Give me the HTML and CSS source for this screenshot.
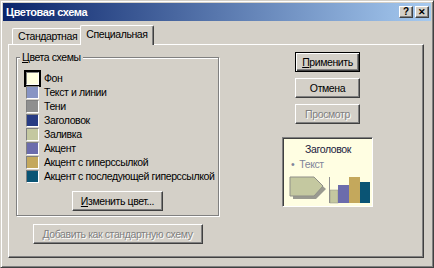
FILE: index.html
```html
<!DOCTYPE html>
<html lang="ru">
<head>
  <meta charset="UTF-8" />
  <title>Цветовая схема</title>
  <link rel="stylesheet" href="styles.css">
</head>
<body>
  <div class="window">
    <div class="titlebar">
      <span class="title">Цветовая схема</span>
      <div class="caption-btns">
        <span class="cap-btn">?</span>
        <span class="cap-btn close">&#x2715;</span>
      </div>
    </div>

    <div class="tabs">
      <div class="tab">Стандартная</div>
      <div class="tab active">Специальная</div>
    </div>

    <div class="panel">
      <div class="left-col">
        <fieldset class="group">
          <legend><u>Ц</u>вета схемы</legend>
          <div class="row"><span class="swatch selected" style="background:#ffffe0"></span>Фон</div>
          <div class="row"><span class="swatch" style="background:#8794c4"></span>Текст и линии</div>
          <div class="row"><span class="swatch" style="background:#8f8f8f"></span>Тени</div>
          <div class="row"><span class="swatch" style="background:#283c84"></span>Заголовок</div>
          <div class="row"><span class="swatch" style="background:#c4c8a0"></span>Заливка</div>
          <div class="row"><span class="swatch" style="background:#6c6cac"></span>Акцент</div>
          <div class="row"><span class="swatch" style="background:#c4a85c"></span>Акцент с гиперссылкой</div>
          <div class="row"><span class="swatch" style="background:#0a5474"></span>Акцент с последующей гиперссылкой</div>
          <div class="center">
            <button class="btn btn-change"><u>И</u>зменить цвет...</button>
          </div>
        </fieldset>
        <div class="center">
          <button class="btn btn-add" disabled><u>Д</u>обавить как стандартную схему</button>
        </div>
      </div>

      <div class="right-col">
        <button class="btn default"><u>П</u>рименить</button>
        <button class="btn">Отмена</button>
        <button class="btn" disabled>Просмотр</button>

        <div class="preview">
          <div class="pv-title">Заголовок</div>
          <div class="pv-text">&#8226;&nbsp; Текст</div>
          <svg class="pv-graph" width="87" height="32" viewBox="0 0 87 32">
            <!-- стрелка с тенью -->
            <polygon points="8,8 31,8 41,17 31,27 8,27" fill="#9a9a90" />
            <polygon points="5,5 29,5 38,14 29,24 5,24" fill="#c4c8a0" stroke="#8f8f88" stroke-width="1" />
            <!-- диаграмма -->
            <line x1="44.5" y1="5" x2="44.5" y2="31" stroke="#8f8f8f" />
            <rect x="45" y="18" width="8" height="13" fill="#c4c8a0" stroke="#8f8f88" stroke-width="0.5" />
            <rect x="53" y="13" width="11" height="18" fill="#6c6cac" />
            <rect x="64" y="5" width="11" height="26" fill="#c4a85c" />
            <rect x="75" y="10" width="10" height="21" fill="#0a5474" />
          </svg>
        </div>
      </div>
    </div>
  </div>
</body>
</html>
```

FILE: styles.css
```css
body {
  margin: 0;
  background: #d4d0c8;
  font-family: "Liberation Sans", Arial, sans-serif;
  font-size: 10.5px;
  letter-spacing: -0.4px;
  color: #000;
}
.window {
  width: 434px;
  height: 268px;
  box-sizing: border-box;
  background: #d4d0c8;
  border: 1px solid;
  border-color: #d4d0c8 #404040 #404040 #d4d0c8;
  box-shadow: inset 1px 1px #fff, inset -1px -1px #808080;
  padding: 2px;
}
.titlebar {
  height: 18px;
  display: flex;
  align-items: center;
  justify-content: space-between;
  padding: 0 2px 0 3px;
  background: linear-gradient(to right, #0a246a, #a6caf0);
}
.title {
  color: #fff;
  font-weight: bold;
  font-size: 11px;
  letter-spacing: -0.4px;
}
.caption-btns {
  display: flex;
  gap: 2px;
}
.cap-btn {
  width: 14px;
  height: 12px;
  box-sizing: border-box;
  background: #d4d0c8;
  border: 1px solid;
  border-color: #fff #404040 #404040 #fff;
  box-shadow: inset -1px -1px #808080;
  font-weight: bold;
  font-size: 10px;
  line-height: 10px;
  letter-spacing: 0;
  text-align: center;
}
.cap-btn.close {
  font-size: 9px;
}
.tabs {
  display: flex;
  align-items: flex-end;
  height: 23px;
  margin-left: 7px;
  padding-left: 2px;
  position: relative;
  z-index: 1;
}
.tab {
  height: 16px;
  line-height: 15px;
  padding: 0 5px;
  box-sizing: border-box;
  border: 1px solid;
  border-bottom: none;
  border-color: #fff #404040 #fff #fff;
  box-shadow: inset -1px 0 #808080;
  border-radius: 2px 2px 0 0;
}
.tab.active {
  height: 20px;
  line-height: 17px;
  margin-left: -3px;
  margin-bottom: -1px;
  padding: 0 5px;
  background: #d4d0c8;
}
.panel {
  margin-left: 5px;
  width: 416px;
  height: 214px;
  box-sizing: border-box;
  border: 1px solid;
  border-color: #fff #404040 #404040 #fff;
  box-shadow: inset -1px -1px #808080;
  display: flex;
  padding: 6px 0 0 7px;
}
.left-col {
  width: 203px;
}
.group {
  margin: 0;
  padding: 7px 0 4px 9px;
  border: 1px solid #808080;
  box-shadow: inset 1px 1px #fff, 1px 1px #fff;
  min-width: 0;
}
.group legend {
  padding: 0 2px;
  margin-left: -6px;
  line-height: 13px;
  background: #d4d0c8;
}
.row {
  height: 14px;
  display: flex;
  align-items: center;
  gap: 5px;
  white-space: nowrap;
}
.swatch {
  flex-shrink: 0;
  width: 13px;
  height: 13px;
  box-sizing: border-box;
  border: 1px solid;
  border-color: #808080 #fff #fff #808080;
}
.swatch.selected {
  outline: 2px solid #000;
}
.center {
  display: flex;
  justify-content: center;
  padding-right: 9px;
}
.left-col > .center {
  padding-right: 0;
}
.btn {
  height: 20px;
  padding: 0 4px;
  box-sizing: border-box;
  font-family: inherit;
  font-size: 10.5px;
  letter-spacing: -0.4px;
  white-space: nowrap;
  color: #000;
  background: #d4d0c8;
  border: 1px solid;
  border-color: #fff #404040 #404040 #fff;
  box-shadow: inset -1px -1px #808080;
  border-radius: 0;
}
.btn:disabled {
  color: #808080;
  text-shadow: 1px 1px #fff;
}
.btn-change {
  margin-top: 8px;
  width: 91px;
}
.btn-add {
  margin-top: 8px;
  width: 170px;
}
.right-col {
  margin-left: 63px;
  margin-top: 1px;
  width: 91px;
  display: flex;
  flex-direction: column;
  align-items: center;
  gap: 6px;
}
.right-col .btn {
  width: 65px;
}
.right-col .btn.default {
  border-color: #000;
  box-shadow: inset 1px 1px #fff, inset -1px -1px #404040, inset -2px -2px #808080;
}
.preview {
  margin-top: 7px;
  width: 91px;
  height: 70px;
  box-sizing: border-box;
  border: 1px solid;
  border-color: #808080 #fff #fff #808080;
  box-shadow: inset 1px 1px #404040;
  background: #fffee2;
  display: flex;
  flex-direction: column;
  padding: 5px 1px 0 2px;
}
.pv-title {
  text-align: center;
  color: #1a1a40;
  line-height: 13px;
}
.pv-text {
  margin-top: 2px;
  padding-left: 6px;
  color: #80849a;
  line-height: 12px;
}
.pv-graph {
  display: block;
  margin-top: 2px;
}
```
